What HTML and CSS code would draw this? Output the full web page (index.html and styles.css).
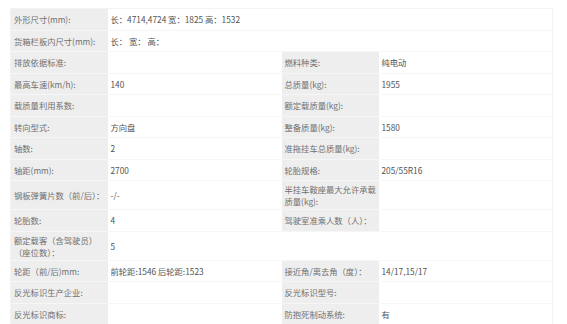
FILE: index.html
```html
<!DOCTYPE html>
<html lang="zh-CN">
<head>
<meta charset="utf-8">
<title>车辆参数</title>
<link rel="stylesheet" href="styles.css">
</head>
<body>
<div class="wrap">
<table class="spec">
<colgroup><col class="c-lab"><col class="c-val"><col class="c-lab"><col class="c-val"></colgroup>
<tbody>
<tr><td class="lab">外形尺寸(mm):</td><td class="val" colspan="3">长：4714,4724 宽：1825 高：1532</td></tr>
<tr><td class="lab">货箱栏板内尺寸(mm):</td><td class="val" colspan="3">长： 宽： 高：</td></tr>
<tr><td class="lab">排放依据标准:</td><td class="val"></td><td class="lab">燃料种类:</td><td class="val">纯电动</td></tr>
<tr><td class="lab">最高车速(km/h):</td><td class="val">140</td><td class="lab">总质量(kg):</td><td class="val">1955</td></tr>
<tr><td class="lab">载质量利用系数:</td><td class="val"></td><td class="lab">额定载质量(kg):</td><td class="val"></td></tr>
<tr><td class="lab">转向型式:</td><td class="val">方向盘</td><td class="lab">整备质量(kg):</td><td class="val">1580</td></tr>
<tr><td class="lab">轴数:</td><td class="val">2</td><td class="lab">准拖挂车总质量(kg):</td><td class="val"></td></tr>
<tr><td class="lab">轴距(mm):</td><td class="val">2700</td><td class="lab">轮胎规格:</td><td class="val">205/55R16</td></tr>
<tr class="tall"><td class="lab">钢板弹簧片数（前/后）：</td><td class="val">-/-</td><td class="lab">半挂车鞍座最大允许承载<br>质量(kg):</td><td class="val"></td></tr>
<tr><td class="lab">轮胎数:</td><td class="val">4</td><td class="lab">驾驶室准乘人数（人）：</td><td class="val"></td></tr>
<tr class="tall2"><td class="lab">额定载客（含驾驶员）<br>（座位数）：</td><td class="val" colspan="3">5</td></tr>
<tr><td class="lab">轮距（前/后)mm:</td><td class="val">前轮距:1546 后轮距:1523</td><td class="lab">接近角/离去角（度）：</td><td class="val">14/17,15/17</td></tr>
<tr><td class="lab">反光标识生产企业:</td><td class="val"></td><td class="lab">反光标识型号:</td><td class="val"></td></tr>
<tr><td class="lab">反光标识商标:</td><td class="val"></td><td class="lab">防抱死制动系统:</td><td class="val">有</td></tr>
</tbody>
</table>
</div>
</body>
</html>
```
FILE: styles.css
```css
html, body {
  margin: 0;
  padding: 0;
  background: #ffffff;
}
.wrap {
  padding: 8px 14px 0 10px;
}
.spec {
  width: 543px;
  border-collapse: collapse;
  table-layout: fixed;
  font-family: "Noto Sans CJK SC", "Noto Sans", sans-serif;
  font-size: 8.3px;
  line-height: 12px;
  border: 1px solid #f3f3f3;
}
.c-lab { width: 97px; }
.c-val { width: 174px; }
.spec tr { height: 21.5px; }
.spec td {
  padding: 2px 1px 2px 3px;
  border-bottom: 1px solid #f6f6f6;
  vertical-align: middle;
  white-space: nowrap;
  overflow: hidden;
}
.lab {
  background: #eeeeee;
  color: #707070;
}
.val {
  background: #ffffff;
  color: #545454;
}
.tall { height: 29px; }
.tall2 { height: 32px; }
```
